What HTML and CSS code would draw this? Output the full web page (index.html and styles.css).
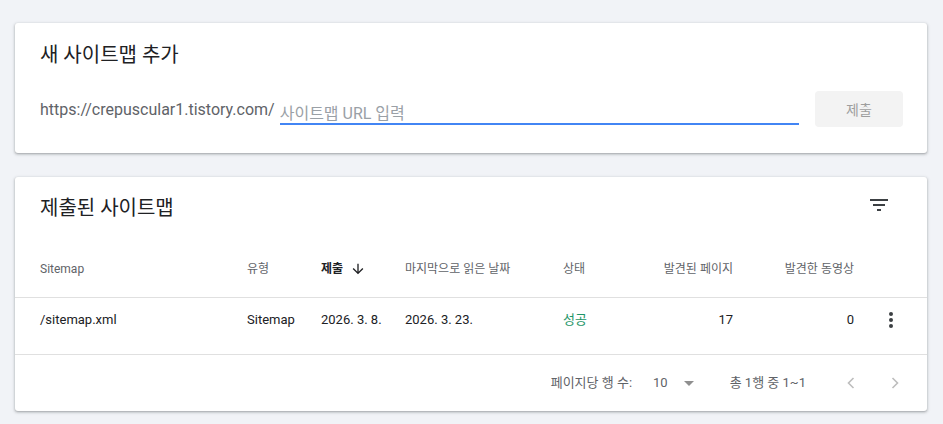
FILE: index.html
```html
<!DOCTYPE html>
<html lang="ko">
<head>
<meta charset="utf-8">
<title>Sitemaps</title>
<link rel="stylesheet" href="styles.css">
</head>
<body>
<main class="page">
  <section class="card add-card">
    <h2 class="card-title">새 사이트맵 추가</h2>
    <div class="add-row">
      <span class="prefix">https://crepuscular1.tistory.com/</span>
      <label class="field">
        <input type="text" placeholder="사이트맵 URL 입력">
      </label>
      <button class="submit" type="button">제출</button>
    </div>
  </section>

  <section class="card list-card">
    <div class="list-head">
      <h2 class="card-title">제출된 사이트맵</h2>
      <button class="icon-btn filter" type="button" aria-label="필터">
        <svg viewBox="0 0 24 24" width="24" height="24"><path d="M10 18h4v-2h-4v2zM3 6v2h18V6H3zm3 7h12v-2H6v2z"/></svg>
      </button>
    </div>

    <div class="table">
      <div class="row head">
        <div class="cell">Sitemap</div>
        <div class="cell">유형</div>
        <div class="cell sorted"><span>제출</span>
          <svg viewBox="0 0 24 24" width="16" height="16"><path d="M20 12l-1.41-1.41L13 16.17V4h-2v12.17l-5.58-5.59L4 12l8 8 8-8z"/></svg>
        </div>
        <div class="cell">마지막으로 읽은 날짜</div>
        <div class="cell">상태</div>
        <div class="cell num">발견된 페이지</div>
        <div class="cell num">발견한 동영상</div>
        <div class="cell"></div>
      </div>
      <div class="row body">
        <div class="cell">/sitemap.xml</div>
        <div class="cell">Sitemap</div>
        <div class="cell">2026. 3. 8.</div>
        <div class="cell">2026. 3. 23.</div>
        <div class="cell status">성공</div>
        <div class="cell num">17</div>
        <div class="cell num">0</div>
        <div class="cell more">
          <svg viewBox="0 0 24 24" width="24" height="24"><circle cx="12" cy="6" r="2"/><circle cx="12" cy="12" r="2"/><circle cx="12" cy="18" r="2"/></svg>
        </div>
      </div>
    </div>

    <div class="pager">
      <span class="rows-label">페이지당 행 수:</span>
      <span class="rows-select">
        <span class="rows-value">10</span>
        <svg viewBox="0 0 24 24" width="24" height="24"><path d="M7 10l5 5 5-5z"/></svg>
      </span>
      <span class="range">총 1행 중 1~1</span>
      <button class="icon-btn nav prev" type="button" aria-label="이전">
        <svg viewBox="0 0 24 24" width="24" height="24"><polyline points="14.5,7 9.5,12 14.5,17"/></svg>
      </button>
      <button class="icon-btn nav next" type="button" aria-label="다음">
        <svg viewBox="0 0 24 24" width="24" height="24"><polyline points="9.5,7 14.5,12 9.5,17"/></svg>
      </button>
    </div>
  </section>
</main>
</body>
</html>
```
FILE: styles.css
```css
* {
  box-sizing: border-box;
}

body {
  margin: 0;
  background: #f1f3f7;
  font-family: Roboto, "Noto Sans CJK KR", sans-serif;
  color: #202124;
}

.page {
  display: flex;
  flex-direction: column;
  gap: 24px;
  padding: 23px 16px 13px 15px;
}

.card {
  background: #fff;
  border-radius: 3px;
  box-shadow: 0 1px 2px rgba(60, 64, 67, 0.3), 0 1px 3px 1px rgba(60, 64, 67, 0.15);
}

.card-title {
  margin: 0;
  font-size: 20px;
  font-weight: 400;
  line-height: 28px;
  color: #202124;
}

/* ---- add sitemap card ---- */
.add-card {
  height: 130px;
  padding: 18px 24px 0 25px;
}

.add-row {
  display: flex;
  align-items: center;
  height: 36px;
  margin-top: 22px;
}

.prefix {
  font-size: 16px;
  line-height: 20px;
  padding-top: 2px;
  color: #5f6368;
  white-space: nowrap;
}

.field {
  flex: 1;
  align-self: flex-end;
  display: flex;
  align-items: flex-end;
  height: 30px;
  margin: 0 16px 2px 5px;
  border-bottom: 2px solid #4285f4;
}

.field input {
  width: 100%;
  height: 18px;
  padding: 0;
  border: 0;
  outline: 0;
  background: transparent;
  font-family: inherit;
  font-size: 16px;
  line-height: 18px;
  color: #202124;
}

.field input::placeholder {
  color: #9aa0a6;
}

.submit {
  width: 88px;
  height: 36px;
  border: 0;
  border-radius: 4px;
  background: #f3f3f3;
  font-family: inherit;
  font-size: 14px;
  color: #9e9e9e;
}

/* ---- submitted sitemaps card ---- */
.list-head {
  display: flex;
  justify-content: space-between;
  align-items: flex-start;
  height: 64px;
  padding: 0 24px 0 25px;
}

.list-head .card-title {
  padding-top: 17px;
}

.icon-btn {
  display: flex;
  align-items: center;
  justify-content: center;
  padding: 0;
  border: 0;
  background: transparent;
}

.filter {
  width: 48px;
  height: 48px;
  margin-top: 4px;
}

.filter svg {
  fill: #3c4043;
}

.row {
  display: grid;
  grid-template-columns: 207px 74px 84px 158px 50px 120px 121px 73px;
  align-items: center;
  padding-left: 25px;
  border-bottom: 1px solid #e0e0e0;
}

.row.head {
  height: 57px;
  font-size: 12px;
  line-height: 16px;
  color: #5f6368;
}

.row.body {
  height: 57px;
  padding-bottom: 12px;
  font-size: 13px;
  line-height: 20px;
  color: #202124;
}

.cell {
  white-space: nowrap;
}

.cell.num {
  text-align: right;
}

.sorted {
  display: flex;
  align-items: center;
  gap: 7px;
  font-weight: 700;
  color: #202124;
}

.sorted svg {
  fill: #202124;
}

.status {
  color: #1e9567;
}

.more {
  display: flex;
  justify-content: center;
}

.more svg {
  fill: #3c4043;
}

.pager {
  display: flex;
  align-items: center;
  justify-content: flex-end;
  height: 56px;
  padding-right: 20px;
  font-size: 13px;
  line-height: 20px;
  color: #5f6368;
}

.rows-select {
  display: flex;
  align-items: center;
  gap: 9px;
  margin-left: 21px;
}

.rows-select svg {
  fill: #8f8f8f;
}

.range {
  margin-left: 29px;
}

.nav {
  width: 24px;
  height: 24px;
}

.nav svg {
  fill: none;
  stroke: #bdbdbd;
  stroke-width: 1.6;
}

.prev {
  margin-left: 33px;
}

.next {
  margin-left: 20px;
}
```
